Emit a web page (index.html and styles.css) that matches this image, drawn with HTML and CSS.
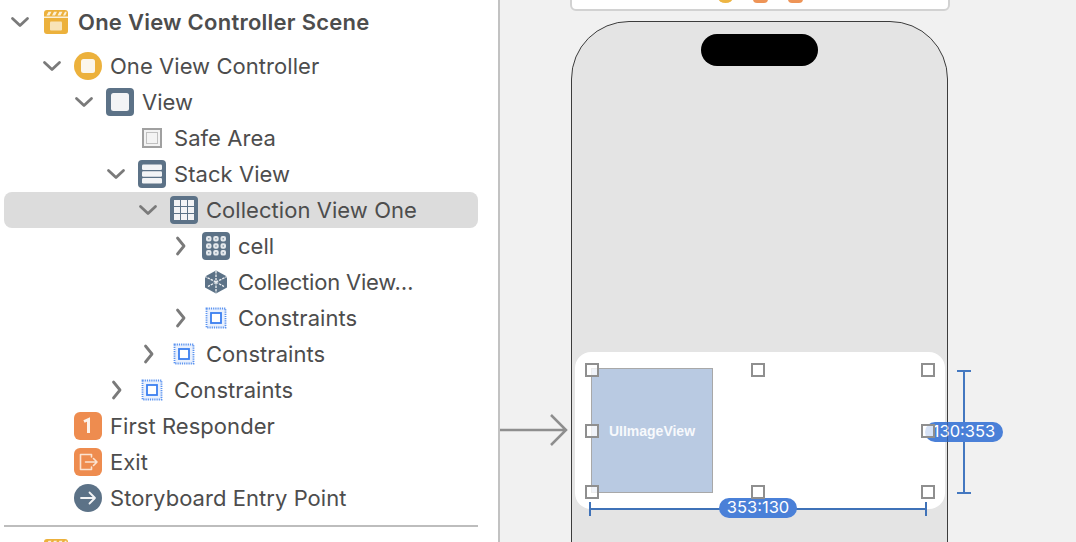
FILE: index.html
```html
<!DOCTYPE html>
<html lang="en">
<head>
    <meta charset="UTF-8">
    <meta name="viewport" content="width=device-width, initial-scale=1.0">
    <title>Storyboard</title>
    <link rel="stylesheet" href="styles.css">
</head>
<body>
    <svg class="defs" width="0" height="0">
        <symbol id="chev-down" viewBox="0 0 24 24"><path d="M4.500 8.500 12 15.500 19.500 8.500" fill="none" stroke="#7a7a7a" stroke-width="2.800" stroke-linecap="round" stroke-linejoin="round"/></symbol>
        <symbol id="chev-right" viewBox="0 0 24 24"><path d="M9.500 4 16 12 9.500 20" fill="none" stroke="#7a7a7a" stroke-width="2.800" stroke-linecap="round" stroke-linejoin="round"/></symbol>
        <symbol id="scene" viewBox="0 0 28 28">
            <rect x="2" y="2" width="24" height="24" rx="3" fill="#ecb13c"/>
            <path d="M2 8.500h24v1.500H2z" fill="#fbf0d8"/>
            <path d="M4.500 7.400 6.500 3.800h3l-2 3.600zM10 7.400l2-3.600h3l-2 3.600zM15.500 7.400l2-3.600h3l-2 3.600zM21 7.400l2-3.600h1.500v1.200l-1.300 2.400z" fill="#fbf0d8"/>
            <rect x="8" y="13.500" width="12" height="9" rx="1" fill="#f8e3b8"/>
        </symbol>
        <symbol id="controller" viewBox="0 0 28 28">
            <circle cx="14" cy="14" r="14" fill="#ecb13c"/>
            <rect x="7" y="7" width="14" height="14" rx="2.500" fill="#fbf6ec"/>
        </symbol>
        <symbol id="view" viewBox="0 0 28 28">
            <rect width="28" height="28" rx="4" fill="#5c7287"/>
            <rect x="5" y="5" width="18" height="18" rx="2.500" fill="#f3f4f6"/>
        </symbol>
        <symbol id="safe" viewBox="0 0 28 28">
            <rect x="5" y="5" width="18" height="18" fill="#f3f3f3" stroke="#a0a0a0" stroke-width="2"/>
            <rect x="8.500" y="8.500" width="11" height="11" fill="none" stroke="#8c8c8c" stroke-width="1" stroke-dasharray="1 1"/>
        </symbol>
        <symbol id="stack" viewBox="0 0 28 28">
            <rect width="28" height="28" rx="4" fill="#5c7287"/>
            <rect x="4" y="4.500" width="20" height="5.500" rx="1.200" fill="#f3f4f6"/>
            <rect x="4" y="11.300" width="20" height="5.500" rx="1.200" fill="#f3f4f6"/>
            <rect x="4" y="18" width="20" height="5.500" rx="1.200" fill="#f3f4f6"/>
        </symbol>
        <symbol id="collection" viewBox="0 0 28 28">
            <rect width="28" height="28" rx="4" fill="#5c7287"/>
            <path d="M4 4h6v6H4zM11 4h6v6h-6zM18 4h6v6h-6zM4 11h6v6H4zM11 11h6v6h-6zM18 11h6v6h-6zM4 18h6v6H4zM11 18h6v6h-6zM18 18h6v6h-6z" fill="#f3f4f6"/>
        </symbol>
        <symbol id="cell" viewBox="0 0 28 28">
            <rect width="28" height="28" rx="4" fill="#5c7287"/>
            <g fill="#8d9dac" stroke="#e4e8ec" stroke-width="2">
                <rect x="5" y="5" width="3.500" height="3.500" rx="1"/><rect x="12.200" y="5" width="3.500" height="3.500" rx="1"/><rect x="19.500" y="5" width="3.500" height="3.500" rx="1"/>
                <rect x="5" y="12.200" width="3.500" height="3.500" rx="1"/><rect x="12.200" y="12.200" width="3.500" height="3.500" rx="1"/><rect x="19.500" y="12.200" width="3.500" height="3.500" rx="1"/>
                <rect x="5" y="19" width="3.500" height="3.500" rx="1"/><rect x="12.200" y="19" width="3.500" height="3.500" rx="1"/><rect x="19.500" y="19" width="3.500" height="3.500" rx="1"/>
            </g>
        </symbol>
        <symbol id="cube" viewBox="0 0 28 28">
            <path d="M14 2.500 25 8.500V19.500L14 25.500 3 19.500V8.500z" fill="#5c7287"/>
            <path d="M14 3v11M14 14v11M14 14 25 8.500M14 14 3 8.500M14 14 6 18.500M14 14l8 4.500" stroke="#f3f4f6" stroke-width="1.300" stroke-dasharray="2.500 1" fill="none"/>
        </symbol>
        <symbol id="constraints" viewBox="0 0 28 28">
            <rect x="4.500" y="4.500" width="19" height="19" fill="#eaf1fd" stroke="#5b93f0" stroke-width="1.800" stroke-dasharray="1.200 1"/>
            <rect x="9" y="9" width="10" height="10" fill="#fff" stroke="#3b7ff0" stroke-width="1.800"/>
        </symbol>
        <symbol id="responder" viewBox="0 0 28 28">
            <rect width="28" height="28" rx="6" fill="#ee8c4f"/>
            <path d="M10 9.500 14.500 7.500V21" fill="none" stroke="#fdf3ea" stroke-width="3"/>
        </symbol>
        <symbol id="exit" viewBox="0 0 28 28">
            <rect width="28" height="28" rx="6" fill="#ee8c4f"/>
            <path d="M17.500 9V6.500H6.500V21.500H17.500V19M11.500 14H23M19.500 10.500 23 14 19.500 17.500" fill="none" stroke="#fbe3d2" stroke-width="1.600" stroke-linejoin="round" stroke-linecap="round"/>
        </symbol>
        <symbol id="entry" viewBox="0 0 28 28">
            <circle cx="14" cy="14" r="14" fill="#5c7287"/>
            <path d="M7 14H21M15.500 8.500 21 14 15.500 19.500" fill="none" stroke="#f3f4f6" stroke-width="1.800" stroke-linecap="round" stroke-linejoin="round"/>
        </symbol>
    </svg>

    <div class="app">
        <div class="outline">
            <div class="row scene-row depth-0">
                <svg class="chev"><use href="#chev-down"/></svg>
                <svg class="icon"><use href="#scene"/></svg>
                <span>One View Controller Scene</span>
            </div>
            <div class="row depth-1">
                <svg class="chev"><use href="#chev-down"/></svg>
                <svg class="icon"><use href="#controller"/></svg>
                <span>One View Controller</span>
            </div>
            <div class="row depth-2">
                <svg class="chev"><use href="#chev-down"/></svg>
                <svg class="icon"><use href="#view"/></svg>
                <span>View</span>
            </div>
            <div class="row depth-3">
                <svg class="chev"></svg>
                <svg class="icon"><use href="#safe"/></svg>
                <span>Safe Area</span>
            </div>
            <div class="row depth-3">
                <svg class="chev"><use href="#chev-down"/></svg>
                <svg class="icon"><use href="#stack"/></svg>
                <span>Stack View</span>
            </div>
            <div class="row depth-4 selected">
                <svg class="chev"><use href="#chev-down"/></svg>
                <svg class="icon"><use href="#collection"/></svg>
                <span>Collection View One</span>
            </div>
            <div class="row depth-5">
                <svg class="chev"><use href="#chev-right"/></svg>
                <svg class="icon"><use href="#cell"/></svg>
                <span>cell</span>
            </div>
            <div class="row depth-5">
                <svg class="chev"></svg>
                <svg class="icon"><use href="#cube"/></svg>
                <span class="truncated">Collection View…</span>
            </div>
            <div class="row depth-5">
                <svg class="chev"><use href="#chev-right"/></svg>
                <svg class="icon"><use href="#constraints"/></svg>
                <span>Constraints</span>
            </div>
            <div class="row depth-4">
                <svg class="chev"><use href="#chev-right"/></svg>
                <svg class="icon"><use href="#constraints"/></svg>
                <span>Constraints</span>
            </div>
            <div class="row depth-3">
                <svg class="chev"><use href="#chev-right"/></svg>
                <svg class="icon"><use href="#constraints"/></svg>
                <span>Constraints</span>
            </div>
            <div class="row depth-1">
                <svg class="chev"></svg>
                <svg class="icon"><use href="#responder"/></svg>
                <span>First Responder</span>
            </div>
            <div class="row depth-1">
                <svg class="chev"></svg>
                <svg class="icon"><use href="#exit"/></svg>
                <span>Exit</span>
            </div>
            <div class="row depth-1">
                <svg class="chev"></svg>
                <svg class="icon"><use href="#entry"/></svg>
                <span>Storyboard Entry Point</span>
            </div>
            <div class="divider"></div>
            <div class="row scene-row depth-0">
                <svg class="chev"></svg>
                <svg class="icon"><use href="#scene"/></svg>
            </div>
        </div>

        <div class="canvas">
            <div class="dock">
                <i class="dot dot-yellow"></i>
                <i class="dot dot-orange"></i>
                <i class="dot dot-orange"></i>
            </div>

            <div class="phone">
                <div class="notch"></div>
            </div>

            <div class="stack-view"></div>
            <div class="image-view">UIImageView</div>

            <svg class="entry-arrow" width="70" height="36" viewBox="0 0 70 36">
                <path d="M0 18H66M51 3 66 18 51 33" fill="none" stroke="#8e8e8e" stroke-width="2.500"/>
            </svg>

            <div class="dim-h"></div>
            <div class="dim-v"></div>
            <div class="badge badge-h">353:130</div>
            <div class="badge badge-v">130:353</div>

            <i class="handle h-tl"></i>
            <i class="handle h-tc"></i>
            <i class="handle h-tr"></i>
            <i class="handle h-ml"></i>
            <i class="handle h-mr"></i>
            <i class="handle h-bl"></i>
            <i class="handle h-bc"></i>
            <i class="handle h-br"></i>
        </div>
    </div>
</body>
</html>
```

FILE: styles.css
```css
html, body {
    margin: 0;
    height: 100%;
    overflow: hidden;
}

body {
    font-family: Inter, "Liberation Sans", sans-serif;
    color: #4d4d4d;
    background-color: #fff;
}

.defs {
    position: absolute;
}

.app {
    display: flex;
    height: 542px;
}

/* outline on the left */
.outline {
    width: 500px;
    flex-shrink: 0;
    box-sizing: border-box;
    padding: 4px 20px 0 4px;
    overflow: hidden;
    background-color: #fff;
    border-right: 2px solid #c2c2c2;
}

.row {
    display: flex;
    align-items: center;
    height: 36px;
    font-size: 22px;
    letter-spacing: 0.05px;
    white-space: nowrap;
    border-radius: 8px;
}

.scene-row {
    font-weight: 600;
    letter-spacing: 0.25px;
    margin-bottom: 8px;
}

.truncated {
    letter-spacing: -0.2px;
}

.selected {
    background-color: #dcdcdc;
}

.depth-0 { padding-left: 4px; }
.depth-1 { padding-left: 36px; }
.depth-2 { padding-left: 68px; }
.depth-3 { padding-left: 100px; }
.depth-4 { padding-left: 132px; }
.depth-5 { padding-left: 164px; }

.chev {
    width: 24px;
    height: 24px;
    flex-shrink: 0;
    margin-right: 10px;
}

.icon {
    width: 28px;
    height: 28px;
    flex-shrink: 0;
    margin-right: 8px;
}

.divider {
    height: 2px;
    margin-top: 9px;
    margin-bottom: 6px;
    background-color: #bdbdbd;
}

/* storyboard canvas */
.canvas {
    position: relative;
    flex: 1;
    overflow: hidden;
    background-color: #f1f1f1;
}

.dock {
    position: absolute;
    left: 70px;
    top: -10px;
    width: 380px;
    height: 21px;
    background-color: #fff;
    border: 2px solid #d2d2d2;
    border-radius: 6px;
    box-sizing: border-box;
}

.dot {
    position: absolute;
    top: 0;
    width: 15px;
    height: 11px;
    border-radius: 4px;
    background-color: #ee9457;
}

.dot-yellow {
    left: 146px;
    border-radius: 50%;
    background-color: #edb543;
}

.dot-orange {
    left: 181px;
}

.dot-orange + .dot-orange {
    left: 216px;
}

.phone {
    position: absolute;
    left: 71px;
    top: 21px;
    width: 377px;
    height: 600px;
    box-sizing: border-box;
    background-color: #e4e4e4;
    border: 1px solid #3c3c3c;
    border-radius: 58px;
}

.notch {
    width: 117px;
    height: 32px;
    margin: 12px auto 0;
    border-radius: 16px;
    background-color: #000;
}

.stack-view {
    position: absolute;
    left: 75px;
    top: 352px;
    width: 370px;
    height: 157px;
    border-radius: 16px;
    background-color: #fff;
}

.image-view {
    position: absolute;
    left: 91px;
    top: 368px;
    width: 122px;
    height: 125px;
    box-sizing: border-box;
    display: flex;
    align-items: center;
    justify-content: center;
    background-color: #b9cae2;
    border: 1px solid #a8a8a8;
    color: #f7f9fc;
    font-family: "Liberation Sans", sans-serif;
    font-size: 14px;
    font-weight: bold;
}

.entry-arrow {
    position: absolute;
    left: 0;
    top: 412px;
}

.dim-h {
    position: absolute;
    left: 89px;
    top: 502px;
    width: 338px;
    height: 14px;
    box-sizing: border-box;
    border-left: 2px solid #3f72b8;
    border-right: 2px solid #3f72b8;
    background: linear-gradient(#3f72b8, #3f72b8) center / 100% 2px no-repeat;
}

.dim-v {
    position: absolute;
    left: 457px;
    top: 370px;
    width: 14px;
    height: 124px;
    box-sizing: border-box;
    border-top: 2px solid #4478c0;
    border-bottom: 2px solid #4478c0;
    background: linear-gradient(#4478c0, #4478c0) center / 2px 100% no-repeat;
}

.badge {
    position: absolute;
    width: 78px;
    height: 20px;
    border-radius: 10px;
    background-color: #4a80d8;
    color: #fff;
    font-size: 16.500px;
    line-height: 18px;
    text-align: center;
}

.badge-h {
    left: 219px;
    top: 498px;
}

.badge-v {
    left: 425px;
    top: 422px;
}

/* phone edge shows through the badge */
.badge-v::after {
    content: "";
    position: absolute;
    left: 22px;
    top: 0;
    width: 1px;
    height: 20px;
    background-color: rgba(0, 0, 0, 0.25);
}

.handle {
    position: absolute;
    width: 14px;
    height: 14px;
    box-sizing: border-box;
    background-color: rgba(255, 255, 255, 0.78);
    border: 2px solid #8f8f8f;
}

.h-tl { left: 85px; top: 363px; }
.h-tc { left: 251px; top: 363px; }
.h-tr { left: 421px; top: 363px; }
.h-ml { left: 85px; top: 424px; }
.h-mr { left: 421px; top: 424px; }
.h-bl { left: 85px; top: 485px; }
.h-bc { left: 251px; top: 485px; }
.h-br { left: 421px; top: 485px; }
```
